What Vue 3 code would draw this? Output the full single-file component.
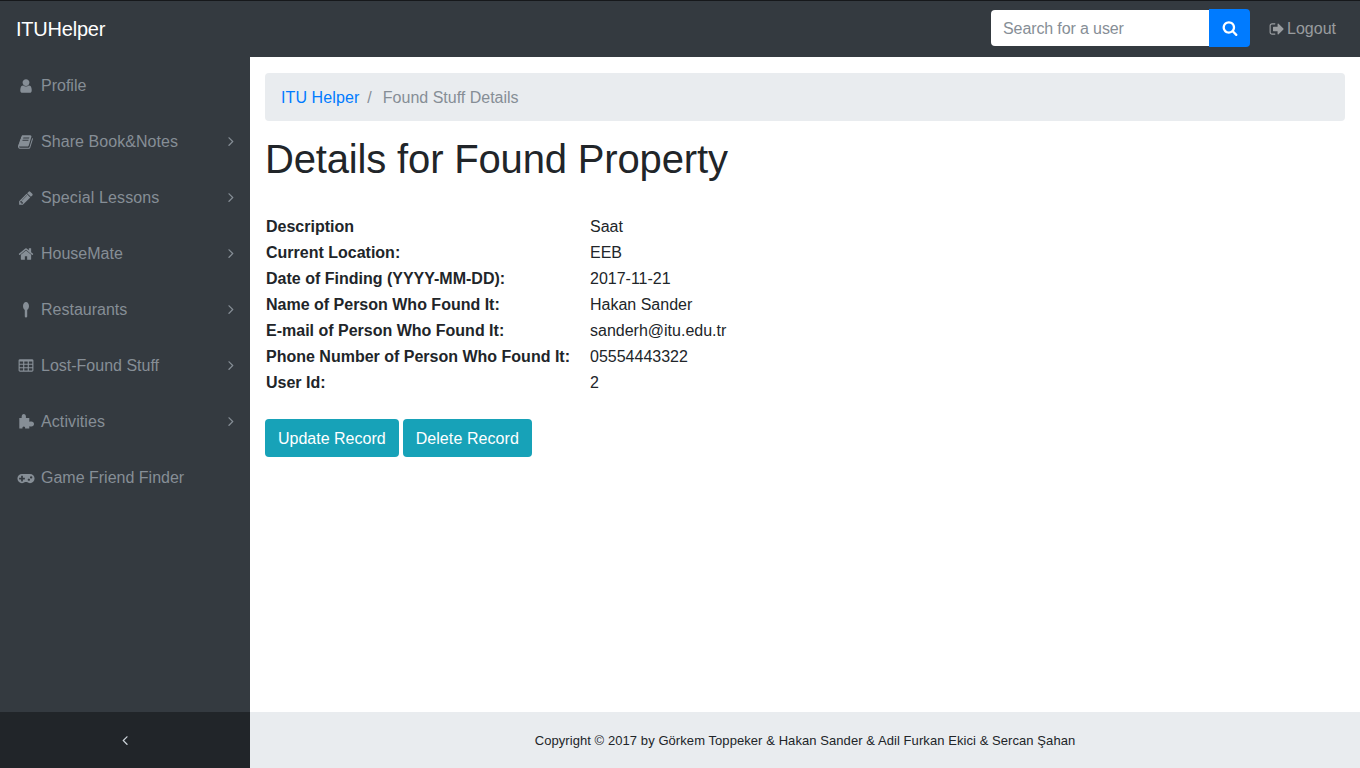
<script setup>
const P = {
  user: 'M1536 1399q0 109-62.5 187t-150.5 78h-854q-88 0-150.5-78t-62.5-187q0-85 8.5-160.5t31.5-152 58.5-131 94-89 134.5-34.5q131 128 313 128t313-128q76 0 134.5 34.5t94 89 58.5 131 31.5 152 8.5 160.5zm-256-887q0 159-112.5 271.5t-271.5 112.5-271.5-112.5-112.5-271.5 112.5-271.5 271.5-112.5 271.5 112.5 112.5 271.5z',
  book: 'M1639 478q40 57 18 129l-275 906q-19 64-76.5 107.5t-122.5 43.5h-923q-77 0-148.5-53.5t-99.5-131.5q-24-67-2-127 0-4 3-27t4-37q1-8-3-21.5t-3-19.5q2-11 8-21t16.5-23.5 16.5-23.5q23-38 45-91.5t30-91.5q3-10 .5-30t-.5-28q3-11 17-28t17-23q21-36 42-92t25-90q1-9-2.5-32t.5-28q4-13 22-30.5t22-22.5q19-26 42.5-84.5t27.5-96.5q1-8-3-25.5t-2-26.5q2-8 9-18t18-23 17-21q8-12 16.5-30.5t15-35 16-36 19.5-32 26.5-23.5 36-11.5 47.5 5.5l-1 3q38-9 51-9h761q74 0 114 56t18 130l-274 906q-36 119-71.5 153.5t-128.5 34.5h-869q-27 0-38 15-11 16-1 43 24 70 144 70h923q29 0 56-15.5t35-41.5l300-987q7-22 5-57 38 15 59 43zm-1064 2q-4 13 2 22.5t20 9.5h608q13 0 25.5-9.5t16.5-22.5l21-64q4-13-2-22.5t-20-9.5h-608q-13 0-25.5 9.5t-16.5 22.5zm-83 256q-4 13 2 22.5t20 9.5h608q13 0 25.5-9.5t16.5-22.5l21-64q4-13-2-22.5t-20-9.5h-608q-13 0-25.5 9.5t-16.5 22.5z',
  pencil: 'M491 1536l91-91-235-235-91 91v107h128v128h107zm523-928q0-22-22-22-10 0-17 7l-542 542q-7 7-7 17 0 22 22 22 10 0 17-7l542-542q7-7 7-17zm-54-192l416 416-832 832h-416v-416zm683 96q0 53-37 90l-166 166-416-416 166-165q36-38 90-38 53 0 91 38l235 234q37 39 37 91z',
  home: 'M1472 992v480q0 26-19 45t-45 19h-384v-384h-256v384h-384q-26 0-45-19t-19-45v-480q0-1 .5-3t.5-3l575-474 575 474q1 2 1 6zm223-69l-62 74q-8 9-21 11h-3q-13 0-21-7l-692-577-692 577q-12 8-24 7-13-2-21-11l-62-74q-8-10-7-23.5t11-21.5l719-599q32-26 76-26t76 26l244 204v-195q0-14 9-23t23-9h192q14 0 23 9t9 23v408l219 182q10 8 11 21.5t-7 23.5z',
  spoon: 'M896 0c-190 0-336 200-336 460 0 220 90 380 200 430v740q0 110 136 110t136-110v-740c110-50 200-210 200-430 0-260-146-460-336-460z',
  table: 'M576 1376v-192q0-14-9-23t-23-9h-320q-14 0-23 9t-9 23v192q0 14 9 23t23 9h320q14 0 23-9t9-23zm0-384v-192q0-14-9-23t-23-9h-320q-14 0-23 9t-9 23v192q0 14 9 23t23 9h320q14 0 23-9t9-23zm512 384v-192q0-14-9-23t-23-9h-320q-14 0-23 9t-9 23v192q0 14 9 23t23 9h320q14 0 23-9t9-23zm-512-768v-192q0-14-9-23t-23-9h-320q-14 0-23 9t-9 23v192q0 14 9 23t23 9h320q14 0 23-9t9-23zm512 384v-192q0-14-9-23t-23-9h-320q-14 0-23 9t-9 23v192q0 14 9 23t23 9h320q14 0 23-9t9-23zm512 384v-192q0-14-9-23t-23-9h-320q-14 0-23 9t-9 23v192q0 14 9 23t23 9h320q14 0 23-9t9-23zm-512-768v-192q0-14-9-23t-23-9h-320q-14 0-23 9t-9 23v192q0 14 9 23t23 9h320q14 0 23-9t9-23zm512 384v-192q0-14-9-23t-23-9h-320q-14 0-23 9t-9 23v192q0 14 9 23t23 9h320q14 0 23-9t9-23zm0-384v-192q0-14-9-23t-23-9h-320q-14 0-23 9t-9 23v192q0 14 9 23t23 9h320q14 0 23-9t9-23zm128-320v1088q0 66-47 113t-113 47h-1344q-66 0-113-47t-47-113v-1088q0-66 47-113t113-47h1344q66 0 113 47t47 113z',
  puzzle: 'M146 448H420C400 380 400 320 430 200C450 80 540 0 650 0S850 80 870 200C900 320 900 380 880 448H1266V860C1340 840 1400 840 1500 840C1680 840 1792 960 1792 1120S1680 1400 1500 1400C1400 1400 1340 1400 1266 1380V1624H800C820 1500 760 1400 650 1400S480 1500 500 1624H146Z',
  game: 'M832 1024v-128q0-14-9-23t-23-9h-192v-192q0-14-9-23t-23-9h-128q-14 0-23 9t-9 23v192h-192q-14 0-23 9t-9 23v128q0 14 9 23t23 9h192v192q0 14 9 23t23 9h128q14 0 23-9t9-23v-192h192q14 0 23-9t9-23zm576 64q0-53-37.5-90.5t-90.5-37.5-90.5 37.5-37.5 90.5 37.5 90.5 90.5 37.5 90.5-37.5 37.5-90.5zm256-256q0-53-37.5-90.5t-90.5-37.5-90.5 37.5-37.5 90.5 37.5 90.5 90.5 37.5 90.5-37.5 37.5-90.5zm256 128q0 212-150 362t-362 150q-192 0-338-128h-220q-146 128-338 128-212 0-362-150t-150-362 150-362 362-150h896q212 0 362 150t150 362z',
  signout: 'M704 1440q0 4 1 20t.5 26.5-3 23.5-10 19.5-20.5 6.5h-320q-119 0-203.5-84.5t-84.5-203.5v-704q0-119 84.5-203.5t203.5-84.5h320q13 0 22.5 9.5t9.5 22.5q0 4 1 20t.5 26.5-3 23.5-10 19.5-20.5 6.5h-320q-66 0-113 47t-47 113v704q0 66 47 113t113 47h312l11.5 1 11.5 3 8 5.5 7 9 2 13.5zm928-544q0 26-19 45l-544 544q-19 19-45 19t-45-19-19-45v-288h-448q-26 0-45-19t-19-45v-384q0-26 19-45t45-19h448v-288q0-26 19-45t45-19 45 19l544 544q19 19 19 45z',
  search: 'M1216 832q0-185-131.5-316.5t-316.5-131.5-316.5 131.5-131.5 316.5 131.5 316.5 316.5 131.5 316.5-131.5 131.5-316.5zm512 832q0 52-38 90t-90 38q-54 0-90-38l-343-342q-179 124-399 124-143 0-273.5-55.5t-225-150-150-225-55.5-273.5 55.5-273.5 150-225 225-150 273.5-55.5 273.5 55.5 225 150 150 225 55.5 273.5q0 220-124 399l343 343q37 37 37 90z',
  right: 'M1171 960q0 13-10 23l-466 466q-10 10-23 10t-23-10l-50-50q-10-10-10-23t10-23l393-393-393-393q-10-10-10-23t10-23l50-50q10-10 23-10t23 10l466 466q10 10 10 23z',
  left: 'M1203 544q0 13-10 23l-393 393 393 393q10 10 10 23t-10 23l-50 50q-10 10-23 10t-23-10l-466-466q-10-10-10-23t10-23l466-466q10-10 23-10t23 10l50 50q10 10 10 23z'
}

const nav = [
  { label: 'Profile', icon: P.user, box: '0 0 1792 1792', ls: 0 },
  { label: 'Share Book&Notes', icon: P.book, box: '0 0 1792 1792', more: true, ls: 0.06 },
  { label: 'Special Lessons', icon: P.pencil, box: '0 0 1792 1792', more: true, ls: 0.13 },
  { label: 'HouseMate', icon: P.home, box: '0 0 1792 1792', more: true, ls: 0 },
  { label: 'Restaurants', icon: P.spoon, box: '0 0 1792 1792', more: true, ls: 0 },
  { label: 'Lost-Found Stuff', icon: P.table, box: '0 0 1792 1792', more: true, ls: 0 },
  { label: 'Activities', icon: P.puzzle, box: '0 0 1792 1792', more: true, ls: 0.1 },
  { label: 'Game Friend Finder', icon: P.game, box: '0 0 1920 1792', ls: 0 }
]

const rows = [
  ['Description', 'Saat'],
  ['Current Location:', 'EEB'],
  ['Date of Finding (YYYY-MM-DD):', '2017-11-21'],
  ['Name of Person Who Found It:', 'Hakan Sander'],
  ['E-mail of Person Who Found It:', 'sanderh@itu.edu.tr'],
  ['Phone Number of Person Who Found It:', '05554443322'],
  ['User Id:', '2']
]
</script>

<template>
  <div class="page">
    <header class="topbar">
      <a class="brand" href="#">ITUHelper</a>
      <form class="search" @submit.prevent>
        <input class="search-input" type="text" placeholder="Search for a user" />
        <button class="search-btn" type="submit" aria-label="Search">
          <svg class="ico" viewBox="0 0 1792 1792"><path :d="P.search" /></svg>
        </button>
      </form>
      <a class="logout" href="#">
        <svg class="ico" viewBox="0 0 1792 1792"><path :d="P.signout" /></svg>
        Logout
      </a>
    </header>

    <div class="middle">
      <nav class="sidebar">
        <a v-for="item in nav" :key="item.label" class="nav-link" href="#">
          <span class="nav-icon">
            <svg class="ico" :class="{ wide: item.box === '0 0 1920 1792' }" :viewBox="item.box"><path :d="item.icon" /></svg>
          </span>
          <span class="nav-label" :style="{ letterSpacing: item.ls + 'px' }">{{ item.label }}</span>
          <svg v-if="item.more" class="ico chevron" viewBox="0 0 1792 1792"><path :d="P.right" /></svg>
        </a>
      </nav>

      <main class="content">
        <ol class="breadcrumb">
          <li class="crumb-link"><a href="#">ITU Helper</a></li>
          <li class="sep">/</li>
          <li class="active">Found Stuff Details</li>
        </ol>
        <h1>Details for Found Property</h1>
        <table class="details">
          <tbody>
            <tr v-for="row in rows" :key="row[0]">
              <th>{{ row[0] }}</th>
              <td>{{ row[1] }}</td>
            </tr>
          </tbody>
        </table>
        <div class="actions">
          <button class="btn" type="button">Update Record</button>
          <button class="btn btn-delete" type="button">Delete Record</button>
        </div>
      </main>
    </div>

    <div class="bottom">
      <div class="toggler">
        <svg class="ico" viewBox="0 0 1792 1792"><path :d="P.left" /></svg>
      </div>
      <footer class="footer">Copyright © 2017 by Görkem Toppeker &amp; Hakan Sander &amp; Adil Furkan Ekici &amp; Sercan Şahan</footer>
    </div>
  </div>
</template>

<style scoped>
.page {
  display: flex;
  flex-direction: column;
  height: 768px;
  overflow: hidden;
  font-family: "Liberation Sans", Arial, sans-serif;
  font-size: 16px;
  line-height: 24px;
  color: #212529;
  background: #fff;
}
a { text-decoration: none; }
.ico { display: block; width: 16px; height: 16px; fill: currentColor; overflow: visible; }

.topbar {
  display: flex;
  align-items: center;
  flex: none;
  height: 57px;
  box-sizing: border-box;
  padding: 0 16px;
  background: #343a40;
  border-top: 1px solid #16181b;
}
.brand { font-size: 20px; line-height: 30px; color: #fff; letter-spacing: -0.22px; }
.search { display: flex; align-items: center; margin-left: auto; padding-bottom: 2px; }
.search-input {
  box-sizing: border-box;
  width: 218px;
  height: 36px;
  padding: 7px 12px 5px;
  border: 0;
  border-radius: 4px 0 0 4px;
  background: #fff;
  font: inherit;
  color: #495057;
  outline: none;
}
.search-input::placeholder { color: #868e96; opacity: 1; letter-spacing: -0.12px; }
.search-btn {
  display: flex;
  align-items: center;
  justify-content: center;
  width: 41px;
  height: 38px;
  padding: 0;
  border: 0;
  border-radius: 0 4px 4px 0;
  background: #007bff;
  color: #fff;
}
.logout {
  display: flex;
  align-items: center;
  gap: 2px;
  margin-left: 19px;
  margin-right: 8px;
  color: rgba(255, 255, 255, 0.5);
}

.middle { display: flex; flex: 1; min-height: 0; }
.sidebar { flex: none; width: 250px; background: #343a40; }
.nav-link {
  display: flex;
  align-items: center;
  height: 56px;
  box-sizing: border-box;
  padding: 2px 16px 0;
  color: #868e96;
}
.nav-icon { display: flex; justify-content: center; width: 20px; margin-right: 5px; }
.wide { width: 18px; flex: none; }
.nav-label { flex: 1; }
.chevron { margin: -2px -5px 0 0; }

.content { flex: 1; min-width: 0; padding: 16px 15px; }
.breadcrumb {
  display: flex;
  list-style: none;
  height: 48px;
  box-sizing: border-box;
  margin: 0 0 14px;
  padding: 13px 16px 11px;
  border-radius: 4px;
  background: #e9ecef;
}
.breadcrumb a { color: #007bff; letter-spacing: 0.1px; }
.sep { padding: 0 11px 0 8px; color: #868e96; }
.active { color: #868e96; }
h1 {
  margin: 0 0 31px;
  font-size: 40px;
  line-height: 48px;
  font-weight: 400;
  color: #212529;
  letter-spacing: -0.16px;
}
.details { border-collapse: collapse; }
.details th, .details td { padding: 1px; text-align: left; vertical-align: top; }
.details th { font-weight: 700; padding-right: 19px; }
.actions { display: flex; gap: 4px; margin-top: 23px; }
.btn {
  height: 38px;
  padding: 2px 13px 0;
  border: 0;
  border-radius: 4px;
  background: #17a2b8;
  color: #fff;
  font: inherit;
}
.btn-delete { letter-spacing: 0.08px; }

.bottom { display: flex; flex: none; height: 56px; }
.toggler {
  display: flex;
  align-items: center;
  justify-content: center;
  flex: none;
  width: 250px;
  background: #212529;
  color: #ced4da;
}
.footer {
  display: flex;
  align-items: center;
  justify-content: center;
  flex: 1;
  padding-top: 1px;
  box-sizing: border-box;
  background: #e9ecef;
  font-size: 13px;
  letter-spacing: 0.07px;
}
</style>
